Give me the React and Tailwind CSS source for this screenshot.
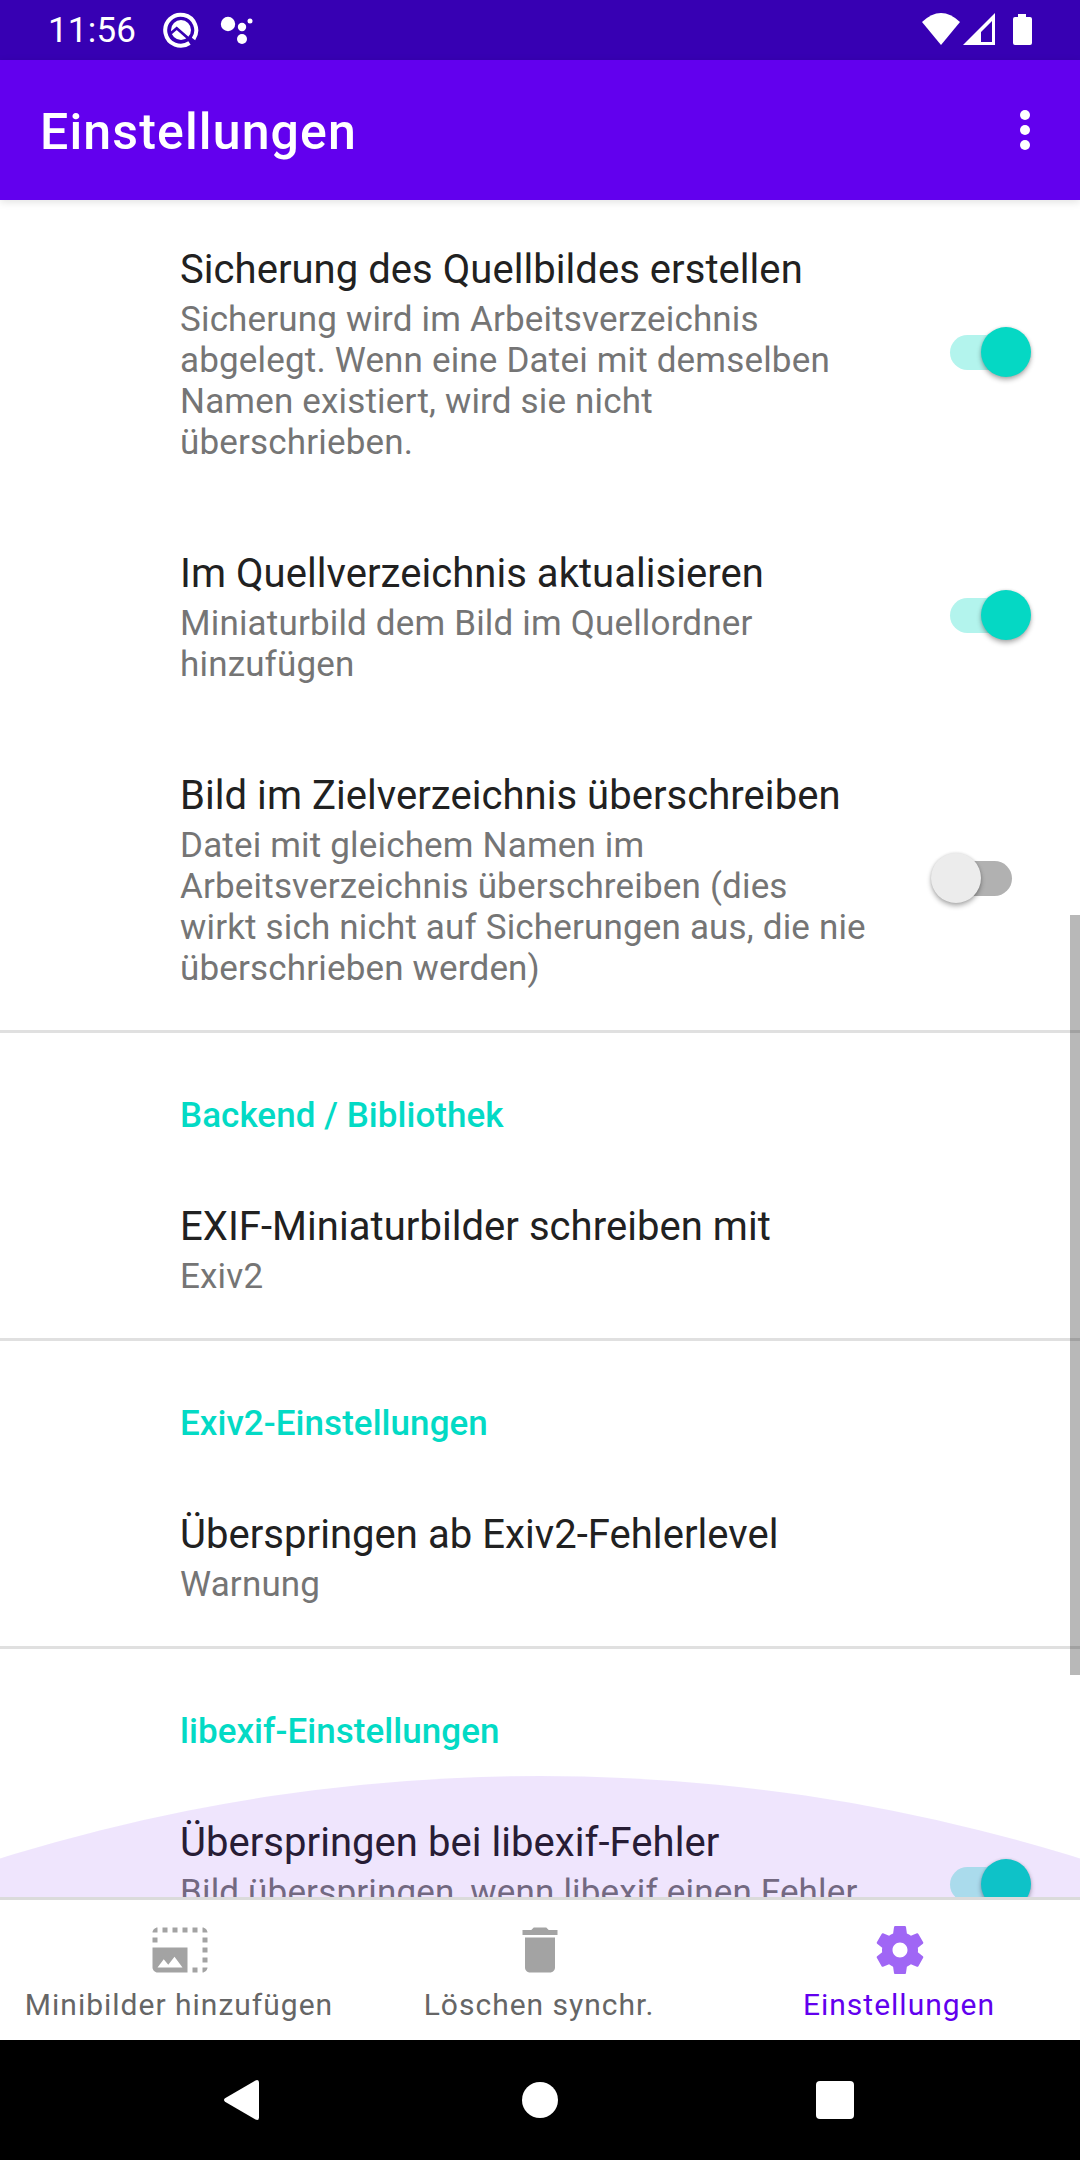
import React from "react";

function Toggle({ on }) {
  return (
    <div className="relative mt-px flex h-[50px] w-[100px] items-center justify-center">
      <div className={on ? "h-[35px] w-[62px] rounded-full bg-[#b3f4ed]" : "h-[35px] w-[62px] rounded-full bg-[#b1b1b1]"} />
      <div
        className={
          on
            ? "absolute top-0 right-0 size-[50px] rounded-full bg-[#05d8c4] shadow-[0_3px_5px_rgba(0,0,0,0.3),0_0_3px_rgba(0,0,0,0.12)]"
            : "absolute top-0 left-0 size-[50px] rounded-full bg-[#ececec] shadow-[0_3px_5px_rgba(0,0,0,0.3),0_0_3px_rgba(0,0,0,0.12)]"
        }
      />
    </div>
  );
}

function Preference({ title, lines, toggle }) {
  return (
    <div className="flex shrink-0 items-center justify-between pt-10 pr-[49px] pb-[41px] pl-[180px]">
      <div className={toggle === undefined ? "whitespace-nowrap" : "min-h-[141px] whitespace-nowrap"}>
        <div className="h-[54px] pt-[6px] text-[40px] leading-[47px] tracking-[0.05px] text-[#212121]">{title}</div>
        <div className="pt-[5px] text-[35px] leading-[41px] tracking-[0.17px] text-[#757575]">
          {lines.map((line) => (
            <div key={line}>{line}</div>
          ))}
        </div>
      </div>
      {toggle !== undefined && <Toggle on={toggle} />}
    </div>
  );
}

function Category({ title }) {
  return (
    <div className="h-[127px] shrink-0 border-t-[3px] border-[#e0e0e0] pt-[62px] pl-[180px] text-[35px] leading-[41px] font-medium tracking-[0.05px] text-[#03dac5]">
      {title}
    </div>
  );
}

function NavItem({ label, active, children }) {
  return (
    <div className={active ? "flex flex-1 flex-col items-center text-[#6200ee]" : "flex flex-1 flex-col items-center text-[#666666]"}>
      <svg viewBox="0 0 24 24" className={active ? "mt-5 size-[60px] fill-[#a066f5]" : "mt-5 size-[60px] fill-[#a3a3a3]"}>
        {children}
      </svg>
      <span className="mt-[7px] mr-[2px] text-[30px] leading-[36px] tracking-[1px] whitespace-nowrap">{label}</span>
    </div>
  );
}

export default function App() {
  return (
    <div className="flex h-[2160px] w-[1080px] flex-col overflow-hidden bg-white font-[Roboto,sans-serif]">
      <div className="flex h-[60px] shrink-0 items-center bg-[#3700b3] text-white">
        <span className="ml-[48px] w-[114px] pt-px text-[35px] leading-[41px] tracking-[0.2px]">11:56</span>
        <svg width="38" height="38" viewBox="0 0 38 38">
          <path d="M27.5 32A15.5 15.5 0 1 1 31.5 28" fill="none" stroke="#fff" strokeWidth="4" />
          <circle cx="19" cy="19" r="10" fill="#fff" />
          <path d="M8.3 22.8L14.7 17.3L31 31.5" fill="none" stroke="#3700b3" strokeWidth="2.8" />
        </svg>
        <svg width="34" height="30" viewBox="0 0 34 30" className="ml-[20px]" fill="#fff">
          <circle cx="8" cy="9" r="7.2" />
          <circle cx="22" cy="12" r="4.2" />
          <circle cx="30" cy="6" r="2.5" />
          <circle cx="22" cy="24" r="5" />
        </svg>
        <svg width="112" height="34" viewBox="0 0 112 34" className="mr-[47px] ml-auto" fill="#fff">
          <path d="M1 9Q20 -9 39 9L20 32Z" />
          <path fillRule="evenodd" d="M42 32L74 0V32ZM60 19V29H71V8Z" />
          <path d="M97 1H105V4H109Q111 4 111 6V30Q111 32 109 32H94Q92 32 92 30V6Q92 4 94 4H97Z" />
        </svg>
      </div>
      <div className="z-10 flex h-[140px] shrink-0 items-center justify-between bg-[#6200ee] pr-[50px] pl-10 text-white shadow-[0_2px_8px_rgba(0,0,0,0.12)]">
        <h1 className="pt-[4px] text-[50px] leading-[60px] font-medium tracking-[1.15px]">Einstellungen</h1>
        <div className="mb-[20px] flex flex-col gap-[5px] pt-[2px] translate-y-[9px]">
          <i className="size-[10px] rounded-full bg-white" />
          <i className="size-[10px] rounded-full bg-white" />
          <i className="size-[10px] rounded-full bg-white" />
        </div>
      </div>
      <div className="relative flex h-[1697px] shrink-0 flex-col overflow-hidden">
        <Preference
          title="Sicherung des Quellbildes erstellen"
          lines={["Sicherung wird im Arbeitsverzeichnis", "abgelegt. Wenn eine Datei mit demselben", "Namen existiert, wird sie nicht", "überschrieben."]}
          toggle={true}
        />
        <Preference title="Im Quellverzeichnis aktualisieren" lines={["Miniaturbild dem Bild im Quellordner", "hinzufügen"]} toggle={true} />
        <Preference
          title="Bild im Zielverzeichnis überschreiben"
          lines={["Datei mit gleichem Namen im", "Arbeitsverzeichnis überschreiben (dies", "wirkt sich nicht auf Sicherungen aus, die nie", "überschrieben werden)"]}
          toggle={false}
        />
        <Category title="Backend / Bibliothek" />
        <Preference title="EXIF-Miniaturbilder schreiben mit" lines={["Exiv2"]} />
        <Category title="Exiv2-Einstellungen" />
        <Preference title="Überspringen ab Exiv2-Fehlerlevel" lines={["Warnung"]} />
        <Category title="libexif-Einstellungen" />
        <Preference title="Überspringen bei libexif-Fehler" lines={["Bild überspringen, wenn libexif einen Fehler"]} toggle={true} />
        <div className="absolute top-[715px] right-0 h-[760px] w-[10px] bg-black/28" />
        <svg viewBox="0 0 1080 121" className="absolute bottom-0 left-0 h-[121px] w-full">
          <circle cx="540" cy="1808" r="1808" fill="#6200ee" fillOpacity="0.1" />
        </svg>
      </div>
      <div className="flex h-[143px] shrink-0 border-t-[3px] border-[#dbdbdb] bg-white">
        <NavItem label="Minibilder hinzufügen">
          <path
            transform="translate(-.4 0)"
            d="M5.4 3h2v2h-2zM9.4 3h2v2h-2zM13.4 3h2v2h-2zM17.4 3h2v2h-2zM21.4 7h2v2h-2zM21.4 11h2v2h-2zM21.4 15h2v2h-2zM17.4 19h2v2h-2zM1.4 7h2v2h-2zM3.4 3v2h-2c0-1 1-2 2-2zM21.4 3c1 0 2 1 2 2h-2zM23.4 19c0 1-1 2-2 2v-2zM1.4 11h14v10h-12c-1 0-2-1-2-2zM3.4 19h10l-3.2-4.3-2.5 3.2-1.8-2.2z"
          />
        </NavItem>
        <NavItem label="Löschen synchr.">
          <path d="M6 19c0 1.1.9 2 2 2h8c1.1 0 2-.9 2-2V7H6v12zM19 4h-3.5l-1-1h-5l-1 1H5v2h14V4z" />
        </NavItem>
        <NavItem label="Einstellungen" active>
          <path d="M19.14 12.94c.04-.3.06-.61.06-.94 0-.32-.02-.64-.07-.94l2.03-1.58a.49.49 0 0 0 .12-.61l-1.92-3.32a.488.488 0 0 0-.59-.22l-2.39.96c-.5-.38-1.03-.7-1.62-.94l-.36-2.54a.484.484 0 0 0-.48-.41h-3.84c-.24 0-.43.17-.47.41l-.36 2.54c-.59.24-1.13.57-1.62.94l-2.39-.96c-.22-.08-.47 0-.59.22L2.74 8.87c-.12.21-.08.47.12.61l2.03 1.58c-.05.3-.09.63-.09.94s.02.64.07.94l-2.03 1.58a.49.49 0 0 0-.12.61l1.92 3.32c.12.22.37.29.59.22l2.39-.96c.5.38 1.03.7 1.62.94l.36 2.54c.05.24.24.41.48.41h3.84c.24 0 .44-.17.47-.41l.36-2.54c.59-.24 1.13-.56 1.62-.94l2.39.96c.22.08.47 0 .59-.22l1.92-3.32c.12-.22.07-.47-.12-.61l-2.01-1.58zM12 15c-1.65 0-3-1.35-3-3s1.35-3 3-3 3 1.35 3 3-1.35 3-3 3z" />
        </NavItem>
      </div>
      <div className="flex h-[120px] shrink-0 items-center bg-black">
        <svg width="35" height="42" viewBox="0 0 35 42" className="ml-[224px]" fill="#fff">
          <path d="M1 19.3L31.5 1.4Q35 0 35 3.5V38.5Q35 42 31.5 40.6L1 22.7Q-1 21 1 19.3Z" />
        </svg>
        <div className="ml-[263px] size-[36px] rounded-full bg-white" />
        <div className="ml-[258px] size-[38px] rounded-[4px] bg-white" />
      </div>
    </div>
  );
}
